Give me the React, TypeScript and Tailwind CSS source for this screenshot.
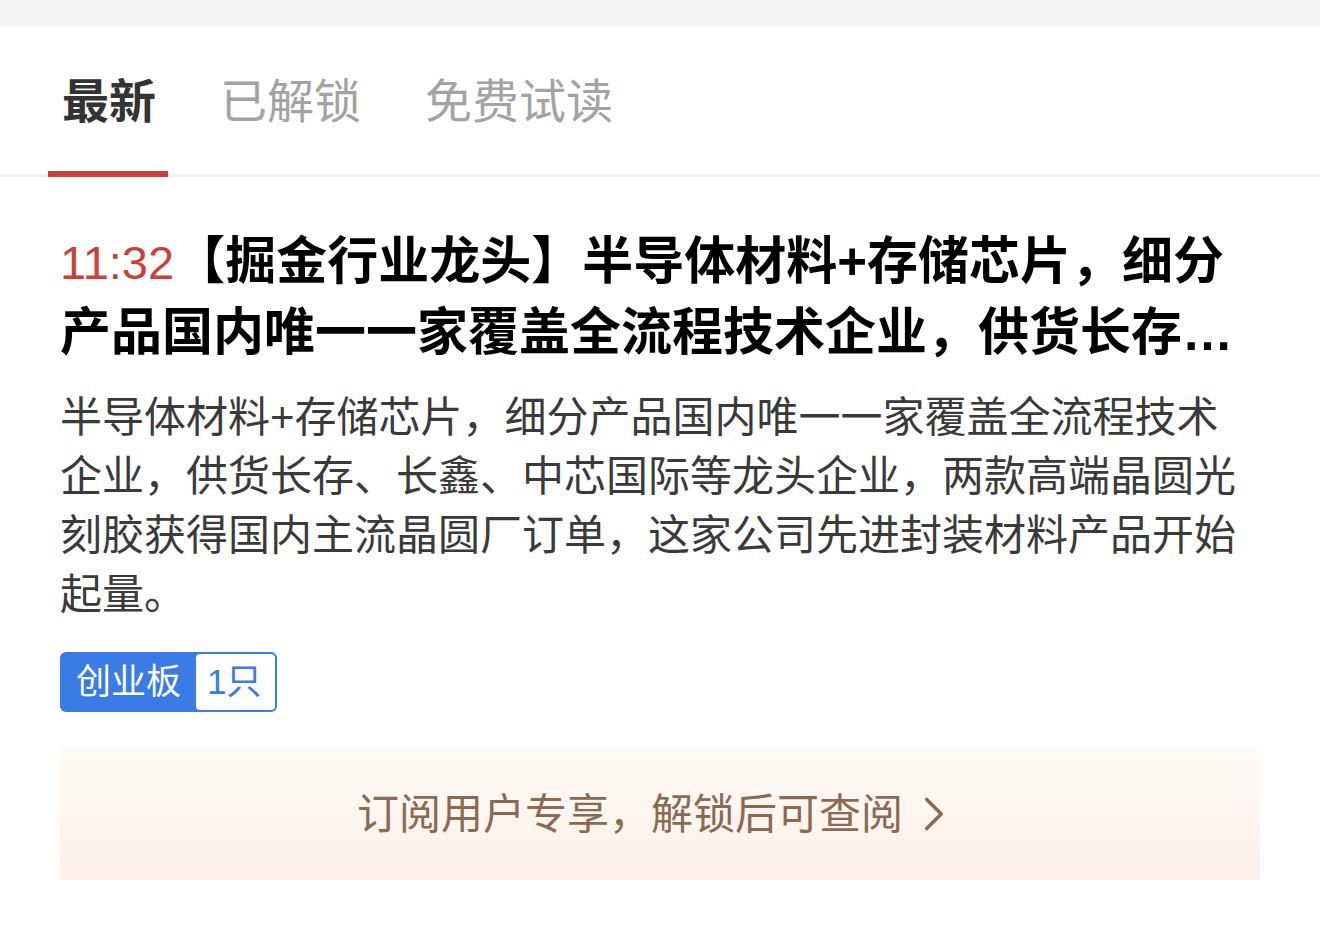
import { ChevronRight } from "lucide-react";

const font = { fontFamily: '"Liberation Sans", "Noto Sans CJK SC", sans-serif' };

const tabs = ["最新", "已解锁", "免费试读"];

export default function App() {
  return (
    <div className="w-[1320px] h-[925px] bg-white overflow-hidden" style={font}>
      <div className="h-[27px] bg-[#f5f5f5]" />

      {/* Tabs */}
      <div className="h-[150px] flex items-stretch gap-[64px] pl-[62px] border-b-[3px] border-[#f2f2f2]">
        {tabs.map((t, i) => (
          <div key={t} className="relative flex items-center">
            <span
              className={
                i === 0
                  ? "text-[47px] font-bold text-[#333333] pt-[4px]"
                  : "text-[47px] text-[#a3a3a3] pt-[4px]"
              }
            >
              {t}
            </span>
            {i === 0 && (
              <span className="absolute -bottom-[3px] left-[-14px] right-[-12px] h-[6px] bg-[#c8423a]" />
            )}
          </div>
        ))}
      </div>

      <div className="px-[60px] pt-[50px]">
        {/* Title */}
        <h1 className="text-[51px] leading-[70px] font-bold text-black line-clamp-2">
          <span className="text-[#c8423a] font-normal text-[47px]">11:32</span>
          【掘金行业龙头】半导体材料+存储芯片，细分产品国内唯一一家覆盖全流程技术企业，供货长存、长鑫、中芯国际等龙头企业
        </h1>

        {/* Summary */}
        <p className="mt-[20px] text-[42px] leading-[59px] text-[#3a3a3a]">
          半导体材料+存储芯片，细分产品国内唯一一家覆盖全流程技术企业，供货长存、长鑫、中芯国际等龙头企业，两款高端晶圆光刻胶获得国内主流晶圆厂订单，这家公司先进封装材料产品开始起量。
        </p>

        {/* Tag */}
        <div className="mt-[28px] inline-flex h-[60px] rounded-[6px] bg-[#3a7ce6] p-[2px]">
          <span className="flex items-center pl-[14px] pr-[15px] text-[35px] text-white">创业板</span>
          <span className="flex items-center pl-[11px] pr-[14px] bg-white rounded-[4px] text-[35px] text-[#3a7ce6]">
            1只
          </span>
        </div>

        {/* Locked notice */}
        <div className="mt-[36px] h-[132px] flex items-center justify-center bg-gradient-to-b from-[#fffaf6] to-[#fdf1e9] text-[#8a6a52]">
          <span className="text-[42px]">订阅用户专享，解锁后可查阅</span>
          <ChevronRight className="ml-[2px] w-[58px] h-[58px]" strokeWidth={1.5} />
        </div>
      </div>
    </div>
  );
}
